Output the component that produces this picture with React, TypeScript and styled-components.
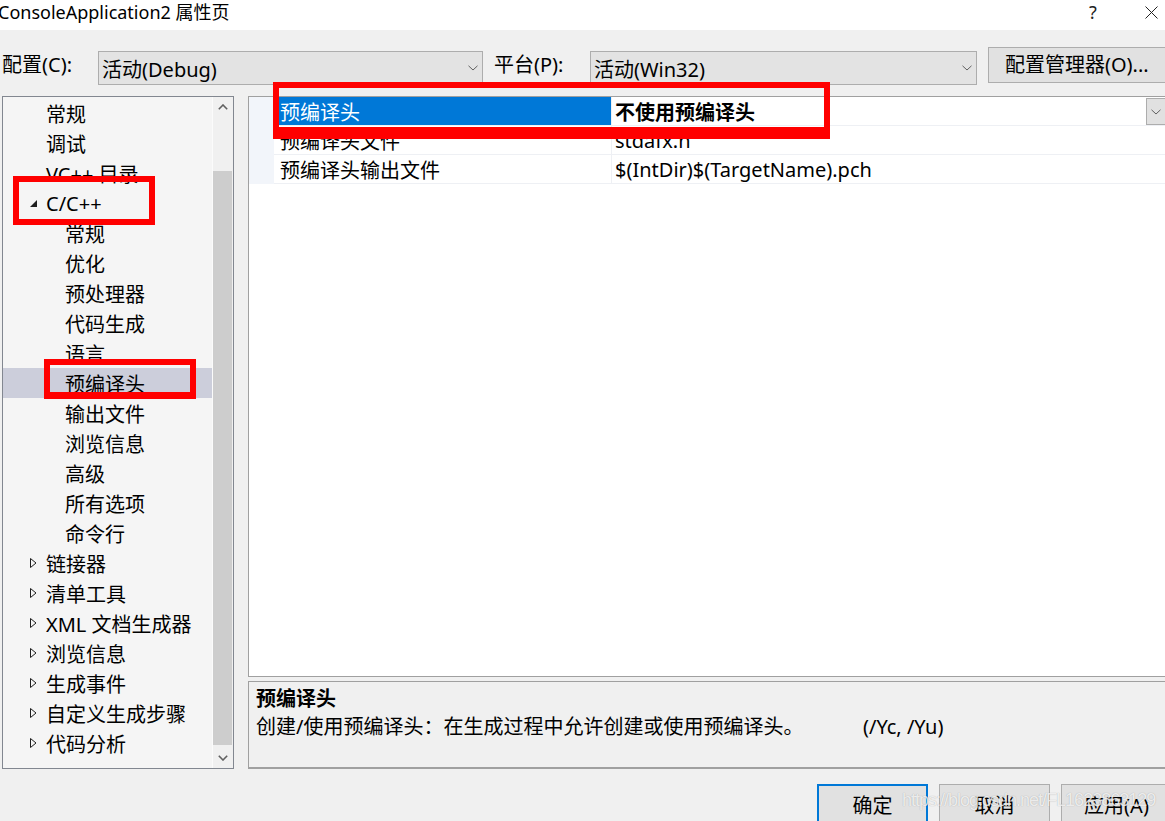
import React from 'react';
import styled, { createGlobalStyle } from 'styled-components';

const FONT = `"Noto Sans", "Noto Sans CJK SC", sans-serif`;

const GlobalStyle = createGlobalStyle`
  html, body { margin: 0; padding: 0; background: #f0f0f0; }
  body { font-family: ${FONT}; }
  * { box-sizing: border-box; }
`;

const Window = styled.div`
  position: relative;
  width: 1165px;
  height: 821px;
  overflow: hidden;
  background: #f0f0f0;
  font-family: ${FONT};
  color: #000;
  display: flex;
  flex-direction: column;
`;

/* ---------- title bar ---------- */
const TitleBar = styled.div`
  flex: 0 0 30px;
  height: 30px;
  background: #fff;
  display: flex;
  align-items: flex-start;
`;
const TitleText = styled.div`
  flex: 1;
  margin-left: -2px;
  font-size: 18px;
  line-height: 24px;
  white-space: nowrap;
`;
const TitleControls = styled.div`
  display: flex;
  gap: 29px;
  flex-shrink: 0;
`;
const TitleButton = styled.div<{ $w: number }>`
  width: ${(p) => p.$w}px;
  height: 24px;
  display: flex;
  align-items: center;
  justify-content: center;
  font-size: 18px;
  color: #222;
`;

/* ---------- toolbar ---------- */
const Toolbar = styled.div`
  flex: 0 0 66px;
  height: 66px;
  display: flex;
  align-items: flex-start;
  padding: 17px 0 0 2px;
  & > * { flex-shrink: 0; }
`;
const FieldLabel = styled.div<{ $ml?: number }>`
  width: 96px;
  height: 36px;
  line-height: 36px;
  font-size: 20px;
  white-space: nowrap;
  margin-left: ${(p) => p.$ml ?? 0}px;
`;
const Combo = styled.div<{ $w: number }>`
  width: ${(p) => p.$w}px;
  height: 34px;
  margin-top: 4px;
  border: 1px solid #adadad;
  background: #e3e3e3;
  display: flex;
  align-items: center;
  padding: 0 4px 0 3px;
  font-size: 20px;
  white-space: nowrap;
`;
const ComboText = styled.span`
  flex: 1;
`;
const ToolButton = styled.div`
  width: 182px;
  height: 36px;
  margin-left: 11px;
  border: 1px solid #adadad;
  background: #e1e1e1;
  font-size: 20px;
  line-height: 34px;
  padding-left: 16px;
  white-space: nowrap;
`;

/* ---------- main ---------- */
const Main = styled.div`
  flex: 0 0 673px;
  height: 673px;
  display: flex;
  gap: 14px;
  padding-left: 2px;
  & > * { flex-shrink: 0; }
`;

const TreePane = styled.div`
  width: 232px;
  height: 673px;
  border: 1px solid #828790;
  background: #f5f5f5;
  display: flex;
`;
const TreeList = styled.div`
  flex: 1;
  padding-top: 1px;
  overflow: hidden;
`;
const TreeRow = styled.div<{ $level: number; $selected?: boolean }>`
  height: 30px;
  display: flex;
  align-items: center;
  padding-left: ${(p) => 24 + p.$level * 19}px;
  background: ${(p) => (p.$selected ? '#cccedb' : 'transparent')};
  font-size: 20px;
  white-space: nowrap;
`;
const Expander = styled.span`
  width: 19px;
  flex: 0 0 19px;
  height: 30px;
  display: flex;
  align-items: center;
  padding-left: 3px;
`;

const ScrollBar = styled.div`
  width: 21px;
  flex: 0 0 21px;
  border-left: 1px solid #fbfbfb;
  background: #f0f0f0;
  display: flex;
  flex-direction: column;
`;
const ScrollArrow = styled.div`
  height: 20px;
  flex: 0 0 20px;
  display: flex;
  align-items: center;
  justify-content: center;
`;
const ScrollTrack = styled.div`
  flex: 1;
  display: flex;
  flex-direction: column;
  padding: 54px 1px 3px 0;
`;
const ScrollThumb = styled.div`
  flex: 1;
  background: #cdcdcd;
`;

const RightColumn = styled.div`
  width: 919px;
  display: flex;
  flex-direction: column;
  gap: 4px;
`;
const GridPane = styled.div`
  height: 581px;
  flex: 0 0 581px;
  border: 1px solid #a0a0a0;
  background: #fff;
  display: flex;
  flex-direction: column;
`;
const PropRow = styled.div`
  display: flex;
  height: 29px;
  flex: 0 0 29px;
  font-size: 20px;
  white-space: nowrap;
`;
const Gutter = styled.div`
  width: 25px;
  flex: 0 0 25px;
  background: #f2f5fa;
`;
const NameCell = styled.div<{ $selected?: boolean }>`
  width: 337px;
  flex: 0 0 337px;
  display: flex;
  align-items: center;
  padding-left: 6px;
  border-bottom: 1px solid #eef0f4;
  background: ${(p) => (p.$selected ? '#0078d7' : '#fff')};
  color: ${(p) => (p.$selected ? '#fff' : '#000')};
`;
const ValueCell = styled.div<{ $bold?: boolean }>`
  flex: 1;
  display: flex;
  align-items: center;
  padding-left: 3px;
  border-left: 1px solid #eef0f4;
  border-bottom: 1px solid #eef0f4;
  font-weight: ${(p) => (p.$bold ? 700 : 400)};
`;
const ValueText = styled.span`
  flex: 1;
`;
const CellDrop = styled.div`
  width: 20px;
  height: 27px;
  align-self: flex-start;
  margin-top: 1px;
  border: 1px solid #adadad;
  background: #e1e1e1;
  display: flex;
  align-items: center;
  justify-content: center;
`;

const DescPane = styled.div`
  flex: 1;
  border: 1px solid #a0a0a0;
  border-bottom-width: 2px;
  background: #f0f0f0;
  padding: 4px 7px;
  font-size: 20px;
`;
const DescTitle = styled.div`
  font-weight: 700;
  line-height: 26px;
`;
const DescLine = styled.div`
  display: flex;
  line-height: 30px;
  white-space: nowrap;
`;
const DescMain = styled.span`
  width: 607px;
  flex: 0 0 607px;
`;

/* ---------- footer ---------- */
const Footer = styled.div`
  flex: 1;
  display: flex;
  justify-content: flex-end;
  gap: 11px;
  padding-top: 15px;
  margin-right: -7px;
  & > * { flex-shrink: 0; }
`;
const DialogButton = styled.div<{ $primary?: boolean }>`
  width: 111px;
  height: 40px;
  border: ${(p) => (p.$primary ? '2px solid #0078d7' : '1px solid #adadad')};
  background: #e1e1e1;
  display: flex;
  align-items: center;
  justify-content: center;
  font-size: 20px;
  white-space: nowrap;
`;

/* ---------- overlays ---------- */
const RedBox = styled.div<{ $l: number; $t: number; $w: number; $h: number; $bb?: number }>`
  position: absolute;
  left: ${(p) => p.$l}px;
  top: ${(p) => p.$t}px;
  width: ${(p) => p.$w}px;
  height: ${(p) => p.$h}px;
  border: 6px solid #ff0000;
  border-bottom-width: ${(p) => p.$bb ?? 6}px;
  pointer-events: none;
`;
const Watermark = styled.div`
  position: absolute;
  left: 902px;
  top: 790px;
  font-family: "Liberation Sans", Arial, sans-serif;
  font-size: 18px;
  letter-spacing: -1px;
  color: rgba(255, 255, 255, 0.8);
  text-shadow: 0 0 1px rgba(0, 0, 0, 0.3);
  white-space: nowrap;
  pointer-events: none;
`;

/* ---------- icons ---------- */
const ChevronDown = () => (
  <svg width="10" height="6" viewBox="0 0 10 6">
    <path d="M0.5 0.8 L5 5 L9.5 0.8" stroke="#606060" strokeWidth="1" fill="none" />
  </svg>
);
const ChevronUp = () => (
  <svg width="10" height="6" viewBox="0 0 10 6">
    <path d="M0.8 5.2 L5 1 L9.2 5.2" stroke="#606060" strokeWidth="1.6" fill="none" />
  </svg>
);
const ChevronDownBold = () => (
  <svg width="10" height="6" viewBox="0 0 10 6">
    <path d="M0.8 0.8 L5 5 L9.2 0.8" stroke="#606060" strokeWidth="1.6" fill="none" />
  </svg>
);
const CloseIcon = () => (
  <svg width="13" height="13" viewBox="0 0 13 13">
    <path d="M0.5 0.5 L12.5 12.5 M12.5 0.5 L0.5 12.5" stroke="#222" strokeWidth="1" fill="none" />
  </svg>
);
const TriOpen = () => (
  <svg width="7" height="7" viewBox="0 0 7 7">
    <polygon points="7,0 7,7 0,7" fill="#1e1e1e" />
  </svg>
);
const TriClosed = () => (
  <svg width="7" height="10" viewBox="0 0 7 10">
    <polygon points="0.5,0.5 6,5 0.5,9.5" fill="none" stroke="#1e1e1e" strokeWidth="1" />
  </svg>
);

type Node = { label: string; level: number; ex?: 'open' | 'closed'; selected?: boolean };

const tree: Node[] = [
  { label: '常规', level: 0 },
  { label: '调试', level: 0 },
  { label: 'VC++ 目录', level: 0 },
  { label: 'C/C++', level: 0, ex: 'open' },
  { label: '常规', level: 1 },
  { label: '优化', level: 1 },
  { label: '预处理器', level: 1 },
  { label: '代码生成', level: 1 },
  { label: '语言', level: 1 },
  { label: '预编译头', level: 1, selected: true },
  { label: '输出文件', level: 1 },
  { label: '浏览信息', level: 1 },
  { label: '高级', level: 1 },
  { label: '所有选项', level: 1 },
  { label: '命令行', level: 1 },
  { label: '链接器', level: 0, ex: 'closed' },
  { label: '清单工具', level: 0, ex: 'closed' },
  { label: 'XML 文档生成器', level: 0, ex: 'closed' },
  { label: '浏览信息', level: 0, ex: 'closed' },
  { label: '生成事件', level: 0, ex: 'closed' },
  { label: '自定义生成步骤', level: 0, ex: 'closed' },
  { label: '代码分析', level: 0, ex: 'closed' },
];

const props = [
  { name: '预编译头', value: '不使用预编译头', selected: true },
  { name: '预编译头文件', value: 'stdafx.h' },
  { name: '预编译头输出文件', value: '$(IntDir)$(TargetName).pch' },
];

export default function App() {
  return (
    <>
      <GlobalStyle />
      <Window>
        <TitleBar>
          <TitleText>ConsoleApplication2 属性页</TitleText>
          <TitleControls>
            <TitleButton $w={30}>?</TitleButton>
            <TitleButton $w={28}>
              <CloseIcon />
            </TitleButton>
          </TitleControls>
        </TitleBar>

        <Toolbar>
          <FieldLabel>配置(C):</FieldLabel>
          <Combo $w={385}>
            <ComboText>活动(Debug)</ComboText>
            <ChevronDown />
          </Combo>
          <FieldLabel $ml={11}>平台(P):</FieldLabel>
          <Combo $w={387}>
            <ComboText>活动(Win32)</ComboText>
            <ChevronDown />
          </Combo>
          <ToolButton>配置管理器(O)...</ToolButton>
        </Toolbar>

        <Main>
          <TreePane>
            <TreeList>
              {tree.map((n, i) => (
                <TreeRow key={i} $level={n.level} $selected={n.selected}>
                  <Expander>
                    {n.ex === 'open' && <TriOpen />}
                    {n.ex === 'closed' && <TriClosed />}
                  </Expander>
                  {n.label}
                </TreeRow>
              ))}
            </TreeList>
            <ScrollBar>
              <ScrollArrow>
                <ChevronUp />
              </ScrollArrow>
              <ScrollTrack>
                <ScrollThumb />
              </ScrollTrack>
              <ScrollArrow>
                <ChevronDownBold />
              </ScrollArrow>
            </ScrollBar>
          </TreePane>

          <RightColumn>
            <GridPane>
              {props.map((p, i) => (
                <PropRow key={i}>
                  <Gutter />
                  <NameCell $selected={p.selected}>{p.name}</NameCell>
                  <ValueCell $bold={p.selected}>
                    <ValueText>{p.value}</ValueText>
                    {p.selected && (
                      <CellDrop>
                        <ChevronDown />
                      </CellDrop>
                    )}
                  </ValueCell>
                </PropRow>
              ))}
            </GridPane>
            <DescPane>
              <DescTitle>预编译头</DescTitle>
              <DescLine>
                <DescMain>创建/使用预编译头：在生成过程中允许创建或使用预编译头。</DescMain>
                <span>(/Yc, /Yu)</span>
              </DescLine>
            </DescPane>
          </RightColumn>
        </Main>

        <Footer>
          <DialogButton $primary>确定</DialogButton>
          <DialogButton>取消</DialogButton>
          <DialogButton>应用(A)</DialogButton>
        </Footer>

        <RedBox $l={273} $t={82} $w={557} $h={57} $bb={12} />
        <RedBox $l={13} $t={176} $w={142} $h={49} />
        <RedBox $l={44} $t={359} $w={152} $h={40} $bb={7} />
        <Watermark>https://blog.csdn.net/FL1623863129</Watermark>
      </Window>
    </>
  );
}
